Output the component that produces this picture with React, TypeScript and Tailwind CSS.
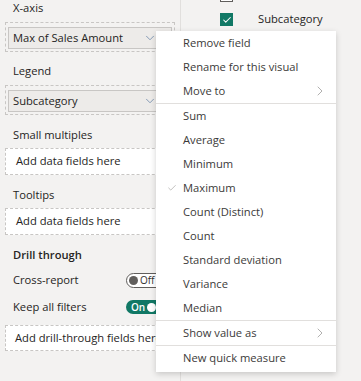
import { ChevronDown, ChevronRight, Check } from "lucide-react"

const font = { fontFamily: '"Open Sans", "Noto Sans", sans-serif' }

const FieldWell = ({ label }: { label: string }) => (
  <div className="mx-[5px] border border-dashed border-[#c8c6c4] px-[2px] pt-[4px] pb-[2px]">
    <div className="flex h-[22px] items-center justify-between border border-[#c8c6c4] bg-[#edebe9] pr-[5px] pl-[4px] text-[11.2px] text-[#252423]">
      <span>{label}</span>
      <ChevronDown size={14} strokeWidth={1.25} className="mr-[9px] text-[#5f7da3]" />
    </div>
  </div>
)

const EmptyWell = ({ text }: { text: string }) => (
  <div className="mx-[5px] flex h-[27px] items-center border border-dashed border-[#c8c6c4] bg-white pl-[10px] text-[11.2px] whitespace-nowrap text-[#252423]">
    {text}
  </div>
)

const Label = ({ children, bold }: { children: string; bold?: boolean }) => (
  <div className={`px-[13px] text-[11.2px] leading-[16px] text-[#252423] ${bold ? "font-semibold" : ""}`}>
    {children}
  </div>
)

const menuGroups: { label: string; checked?: boolean; sub?: boolean }[][] = [
  [{ label: "Remove field" }, { label: "Rename for this visual" }, { label: "Move to", sub: true }],
  [
    { label: "Sum" },
    { label: "Average" },
    { label: "Minimum" },
    { label: "Maximum", checked: true },
    { label: "Count (Distinct)" },
    { label: "Count" },
    { label: "Standard deviation" },
    { label: "Variance" },
    { label: "Median" },
  ],
  [{ label: "Show value as", sub: true }],
  [{ label: "New quick measure" }],
]

const App = () => {
  return (
    <div className="relative flex h-[381px] w-[361px] overflow-hidden bg-[#f3f2f1]" style={font}>
      {/* field wells pane */}
      <div className="flex w-[181px] flex-col border-r border-[#e1dfdd]">
        <Label>X-axis</Label>
        <div className="mt-[6px]">
          <FieldWell label="Max of Sales Amount" />
        </div>
        <div className="mt-[11px]">
          <Label>Legend</Label>
        </div>
        <div className="mt-[6px]">
          <FieldWell label="Subcategory" />
        </div>
        <div className="mt-[12px]">
          <Label>Small multiples</Label>
        </div>
        <div className="mt-[5px]">
          <EmptyWell text="Add data fields here" />
        </div>
        <div className="mt-[12px]">
          <Label>Tooltips</Label>
        </div>
        <div className="mt-[5px]">
          <EmptyWell text="Add data fields here" />
        </div>
        <div className="mt-[12px]">
          <Label bold>Drill through</Label>
        </div>
        <div className="mt-[8px] flex h-[18px] items-center justify-between pr-[14px] pl-[13px] text-[11.2px] text-[#252423]">
          <span>Cross-report</span>
          <span className="flex h-[15px] w-[40px] items-center gap-[2px] rounded-full border border-[#605e5c] bg-white pl-[2px] text-[10px] leading-none text-[#323130]">
            <span className="h-[9px] w-[9px] rounded-full bg-[#605e5c]" />
            Off
          </span>
        </div>
        <div className="mt-[9px] flex h-[18px] items-center justify-between pr-[14px] pl-[13px] text-[11.2px] text-[#252423]">
          <span>Keep all filters</span>
          <span className="flex h-[14px] w-[40px] items-center gap-[2px] rounded-full bg-[#117865] pl-[5px] text-[10px] leading-none font-semibold text-white">
            On
            <span className="h-[9px] w-[9px] rounded-full bg-white" />
          </span>
        </div>
        <div className="mt-[9px]">
          <div className="mx-[5px] flex h-[26px] items-center border border-dashed border-[#c8c6c4] bg-white pl-[9px] text-[11.2px] whitespace-nowrap text-[#252423]">
            Add drill-through fields here
          </div>
        </div>
      </div>

      {/* fields list pane */}
      <div className="flex flex-1 flex-col pl-[39px]">
        <div className="-mt-[15px] flex h-[21px] items-center">
          <span className="h-[13px] w-[13px] border border-[#605e5c] bg-white" />
        </div>
        <div className="flex h-[27px] items-center gap-[25px]">
          <span className="flex h-[13px] w-[13px] items-center justify-center bg-[#117865]">
            <Check size={10} strokeWidth={2.5} className="text-white" />
          </span>
          <span className="text-[11.2px] text-[#252423]">Subcategory</span>
        </div>
      </div>

      {/* context menu */}
      <div className="absolute top-[31px] left-[156px] flex w-[180px] flex-col bg-white pb-[2px] shadow-[0_2px_6px_rgba(0,0,0,0.18)]">
        {menuGroups.map((group, gi) => (
          <div key={gi} className={gi > 0 ? "border-t border-[#e1dfdd]" : ""}>
            {group.map((item) => (
              <div
                key={item.label}
                className="relative flex h-[24px] items-center justify-between pr-[8px] pl-[27px] text-[11.2px] text-[#3b3a39]"
              >
                {item.checked && (
                  <Check size={10} strokeWidth={1.25} className="absolute left-[11px] text-[#8a8886]" />
                )}
                <span>{item.label}</span>
                {item.sub && <ChevronRight size={16} strokeWidth={1} className="text-[#8a8886]" />}
              </div>
            ))}
          </div>
        ))}
      </div>
    </div>
  )
}

export default App
